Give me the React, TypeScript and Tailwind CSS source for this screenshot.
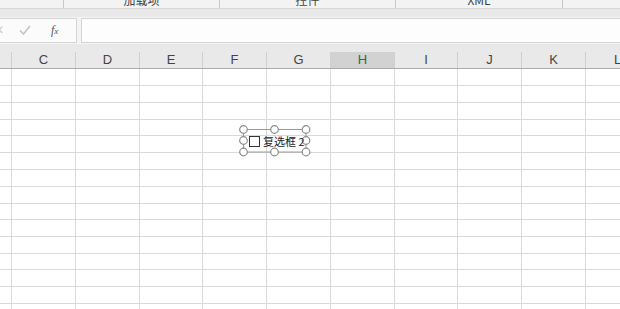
import React from "react";

const ribbonGroups = [
  { w: "w-[64px]", label: "" },
  { w: "w-[156px]", label: "加载项" },
  { w: "w-[176px]", label: "控件" },
  { w: "w-[167px]", label: "XML" },
];

const columns = [
  { w: "w-[12px]", label: "" },
  { w: "w-[64px]", label: "C" },
  { w: "w-[64px]", label: "D" },
  { w: "w-[63px]", label: "E" },
  { w: "w-[64px]", label: "F" },
  { w: "w-[64px]", label: "G" },
  { w: "w-[64px]", label: "H", selected: true },
  { w: "w-[63px]", label: "I" },
  { w: "w-[64px]", label: "J" },
  { w: "w-[64px]", label: "K" },
  { w: "w-[64px]", label: "L" },
];

const rowHeights = [
  "h-[17px]", "h-[17px]", "h-[17px]", "h-[16px]", "h-[17px]", "h-[17px]",
  "h-[17px]", "h-[17px]", "h-[16px]", "h-[17px]", "h-[17px]", "h-[16px]",
  "h-[17px]", "h-[17px]", "h-[17px]",
];

function Handles() {
  const xs = [4.5, 35.5, 67];
  const ys = [4.5, 15.5, 27];
  return (
    <svg width="72" height="32" viewBox="0 0 72 32" className="absolute left-[239px] top-[125px]">
      <rect x="4.5" y="4.5" width="62.5" height="22.5" fill="none" stroke="#9a9a9a" strokeWidth="1" />
      {ys.map((y) =>
        xs.map((x) =>
          x === 35.5 && y === 15.5 ? null : (
            <circle key={`${x}-${y}`} cx={x} cy={y} r="3.8" fill="#ffffff" stroke="#8a8a8a" strokeWidth="1.2" />
          )
        )
      )}
    </svg>
  );
}

export default function App() {
  return (
    <div className="w-[620px] h-[309px] overflow-hidden bg-white relative font-['Liberation_Sans','Noto_Sans_CJK_SC',sans-serif]">
      {/* ribbon group labels (scrolled, cut off at the top) */}
      <div className="flex h-[9px] bg-[#f3f3f3] overflow-hidden border-b border-[#d6d6d6]">
        {ribbonGroups.map((g, i) => (
          <div key={i} className={`${g.w} shrink-0 border-r border-[#c8c8c8] flex justify-center`}>
            <span className="text-[12px] leading-[12px] -mt-[6px] text-[#444] font-['Noto_Sans_CJK_SC',sans-serif]">
              {g.label}
            </span>
          </div>
        ))}
        <div className="flex-1" />
      </div>
      <div className="h-[8px] bg-[#e9e9e9]" />

      {/* formula bar */}
      <div className="flex items-center gap-[4px] h-[27px] bg-[#f4f4f4] -ml-[2px] pb-[1px]">
        <div className="w-[79px] h-[25px] shrink-0 bg-[#fbfbfb] border border-[#d4d4d4] flex items-center">
          <span className="text-[12px] text-[#c8c8c8] -ml-[5px] w-[12px]">✕</span>
          <svg width="12" height="10" viewBox="0 0 12 10" className="ml-[13px]">
            <path d="M1 5.5 L4.5 9 L11 1" fill="none" stroke="#c4c4c4" strokeWidth="1.6" />
          </svg>
          <span className="ml-[20px] text-[12px] italic text-[#555] font-['Liberation_Serif',serif]">
            f<span className="text-[9px]">x</span>
          </span>
        </div>
        <div className="flex-1 h-[25px] bg-[#fdfdfd] border border-[#d4d4d4] -mr-[4px]" />
      </div>
      <div className="h-[8px] bg-[#e9e9e9]" />

      {/* column headers */}
      <div className="flex h-[17px] bg-[#e9e9e9] border-b border-[#ababab]">
        {columns.map((c) => (
          <div
            key={c.label || "b"}
            className={`${c.w} shrink-0 border-r border-[#d0d0d0] flex items-center justify-center text-[13px] ${
              c.selected ? "bg-[#d2d2d2] text-[#217346]" : "text-[#444]"
            }`}
          >
            {c.label}
          </div>
        ))}
      </div>

      {/* cells */}
      <div className="flex flex-col">
        {rowHeights.map((h, r) => (
          <div key={r} className={`flex ${h} shrink-0 border-b border-[#d9d9d9]`}>
            {columns.map((c) => (
              <div key={c.label || "b"} className={`${c.w} shrink-0 border-r border-[#d9d9d9]`} />
            ))}
          </div>
        ))}
      </div>

      <Handles />
      {/* form control checkbox */}
      <div className="absolute left-[249px] top-[135px] flex items-center gap-[3px] whitespace-nowrap">
        <div className="w-[11px] h-[11px] border border-[#333] bg-white" />
        <span className="text-[11px] leading-[13px] text-[#222] font-['Noto_Sans_CJK_SC',sans-serif]">复选框 2</span>
      </div>
    </div>
  );
}
